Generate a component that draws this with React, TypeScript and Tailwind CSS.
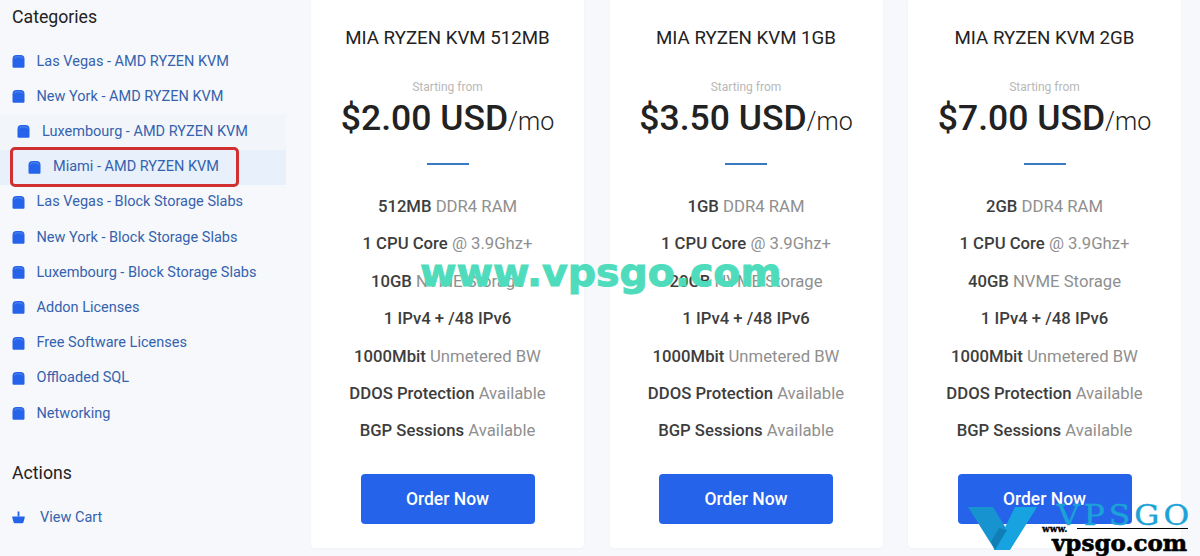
const categories = [
  { name: 'Las Vegas - AMD RYZEN KVM', indent: 0 },
  { name: 'New York - AMD RYZEN KVM', indent: 0 },
  { name: 'Luxembourg - AMD RYZEN KVM', indent: 1 },
  { name: 'Miami - AMD RYZEN KVM', indent: 2 },
  { name: 'Las Vegas - Block Storage Slabs', indent: 0 },
  { name: 'New York - Block Storage Slabs', indent: 0 },
  { name: 'Luxembourg - Block Storage Slabs', indent: 0 },
  { name: 'Addon Licenses', indent: 0 },
  { name: 'Free Software Licenses', indent: 0 },
  { name: 'Offloaded SQL', indent: 0 },
  { name: 'Networking', indent: 0 },
]

const plans = [
  { title: 'MIA RYZEN KVM 512MB', price: '$2.00 USD', ram: '512MB', disk: '10GB' },
  { title: 'MIA RYZEN KVM 1GB', price: '$3.50 USD', ram: '1GB', disk: '20GB' },
  { title: 'MIA RYZEN KVM 2GB', price: '$7.00 USD', ram: '2GB', disk: '40GB' },
]

function BoxIcon() {
  return (
    <svg className="w-[13px] h-[13px] shrink-0" viewBox="0 0 13 13">
      <path d="M4.500 0h4A4 4 0 0 1 12.500 4v7.500a1.200 1.200 0 0 1-1.200 1.200H1.700A1.200 1.200 0 0 1 .5 11.500V4A4 4 0 0 1 4.500 0z" fill="#2563eb" />
      <path d="M2.200 3.600A2.500 2.500 0 0 1 4.500 1.900h4a2.500 2.500 0 0 1 2.300 1.700" fill="none" stroke="#6f9bf2" strokeWidth="0.7" />
    </svg>
  )
}

function BasketIcon() {
  return (
    <svg className="w-[13px] h-[13px] shrink-0" viewBox="0 0 13 13">
      <rect x="5.6" y="0.5" width="1.8" height="5" fill="#2563eb" />
      <path d="M0.3 5.5h12.4v1.2l-1.2 4.3a1.6 1.6 0 0 1-1.5 1.2H3a1.6 1.6 0 0 1-1.5-1.2L0.3 6.700z" fill="#2563eb" />
    </svg>
  )
}

function Feature({ strong, rest }: { strong: string; rest: string }) {
  return (
    <div className="h-[37.4px] leading-[37.4px] text-center text-[16.7px] text-[#8f8f8f]">
      <span className="font-medium text-[#3d3d3d]">{strong}</span> {rest}
    </div>
  )
}

function PlanCard({ title, price, ram, disk }: { title: string; price: string; ram: string; disk: string }) {
  return (
    <div className="w-[273px] h-[548px] bg-white flex flex-col items-center rounded-b-sm shadow-[0_1px_3px_rgba(0,0,0,0.03)]">
      <h2 className="mt-[26px] text-[18.7px] leading-6 font-normal text-[#222]">{title}</h2>
      <div className="mt-[29px] text-[12px] leading-[16px] text-[#b8b8b8]">Starting from</div>
      <div className="mt-[1px] h-[44px] leading-[44px] whitespace-nowrap text-[#222]">
        <span className="text-[35.5px] font-medium">{price}</span>
        <span className="text-[25px] font-light">/mo</span>
      </div>
      <div className="mt-[23px] w-[42px] h-[2px] bg-[#3a78c0]" />
      <div className="mt-[23px] w-full">
        <Feature strong={ram} rest="DDR4 RAM" />
        <Feature strong="1 CPU Core" rest="@ 3.9Ghz+" />
        <Feature strong={disk} rest="NVME Storage" />
        <Feature strong="1 IPv4 + /48 IPv6" rest="" />
        <Feature strong="1000Mbit" rest="Unmetered BW" />
        <Feature strong="DDOS Protection" rest="Available" />
        <Feature strong="BGP Sessions" rest="Available" />
      </div>
      <button className="mt-[24px] w-[174px] h-[50px] bg-[#2563eb] rounded-sm text-white text-[17.5px] font-medium">
        Order Now
      </button>
    </div>
  )
}

export default function App() {
  return (
    <div className="relative w-[1200px] h-[556px] overflow-hidden bg-[#f6f8fb] flex font-['Roboto',sans-serif]">
      {/* Sidebar */}
      <aside className="w-[311px] shrink-0 pt-[5px]">
        <h3 className="pl-3 text-[17.7px] leading-6 font-normal text-[#222]">Categories</h3>
        <nav className="mt-[15px] w-[286px] text-[14.5px] text-[#3562ae]">
          {categories.map((c) => (
            <div
              key={c.name}
              className={
                c.indent === 2
                  ? 'h-[35.2px] flex items-center pl-[28px] bg-[#e7f0fb] gap-[12px]'
                  : c.indent === 1
                    ? 'h-[35.2px] flex items-center pl-[17px] bg-[#f2f6fb] gap-[12px]'
                    : 'h-[35.2px] flex items-center pl-3 gap-[11.5px]'
              }
            >
              <BoxIcon />
              <span>{c.name}</span>
            </div>
          ))}
        </nav>
        <h3 className="mt-[30px] pl-3 text-[17.7px] leading-6 text-[#222]">Actions</h3>
        <div className="mt-[15px] pl-3 h-[35px] flex items-center gap-[15px] text-[14.5px] text-[#3562ae]">
          <BasketIcon />
          <span>View Cart</span>
        </div>
      </aside>

      {/* Plans */}
      <main className="flex gap-[25.500px] items-start">
        {plans.map((p) => (
          <PlanCard key={p.title} {...p} />
        ))}
      </main>

      {/* Red highlight round the selected category */}
      <div className="absolute left-[10px] top-[147px] w-[229px] h-[40px] rounded-[5px] border-[3px] border-[#d0302f]" />

      {/* Watermark */}
      <div className="absolute left-[420px] top-[247px] text-[39.5px] leading-[50px] font-bold text-[#4fdcbc] [-webkit-text-stroke:1px_#4fdcbc] font-['DejaVu_Sans',sans-serif] whitespace-nowrap">
        www.vpsgo.com
      </div>

      {/* Logo watermark */}
      <div className="absolute left-[968px] top-[504px] w-[232px] h-[52px]">
        <svg className="absolute left-0 top-0" width="72" height="48" viewBox="0 0 72 48">
          <path d="M0 3h25l14 23-12 20z" fill="#1793cf" />
          <path d="M47 3h22L42 46H26z" fill="#17a3e0" />
          <path d="M27 46l-4-8 8-14 8 2z" fill="#0f7fb5" />
        </svg>
        <div className="absolute left-[89px] -top-[2px] text-[27px] leading-[28px] font-['DejaVu_Serif',serif] text-[#1ba3d8] tracking-[3.5px] whitespace-nowrap origin-left scale-x-[1.16] [-webkit-text-stroke:0.4px_#1ba3d8]">
          VPSGO
        </div>
        <div className="absolute left-[74px] top-[19px] text-[9px] leading-[12px] font-bold text-black [-webkit-text-stroke:0.3px_#000] font-['DejaVu_Serif',serif]">
          www.
        </div>
        <div className="absolute left-[109px] top-[24px] w-[111px] h-[1px] bg-black" />
        <div className="absolute left-[84px] top-[26px] text-[23px] leading-[26px] font-bold text-black [-webkit-text-stroke:0.6px_#000] font-['DejaVu_Serif',serif] whitespace-nowrap">
          vpsgo.com
        </div>
      </div>
    </div>
  )
}
